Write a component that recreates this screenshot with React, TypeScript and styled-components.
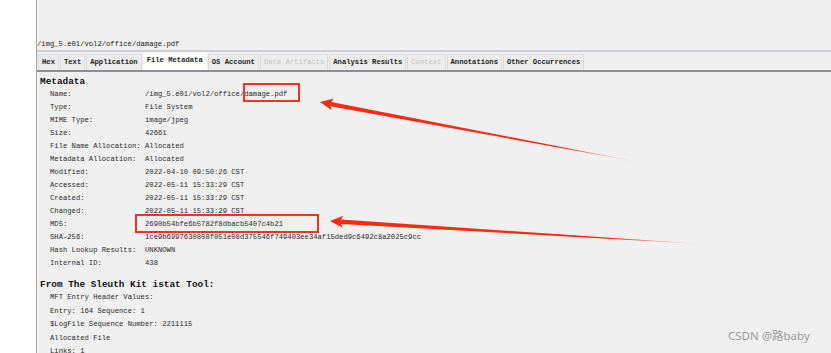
import styled, { createGlobalStyle } from "styled-components";

const GlobalStyle = createGlobalStyle`
    html, body {
        margin: 0;
        padding: 0;
        background: #ffffff;
    }
`;

const mono = `"Liberation Mono", "DejaVu Sans Mono", monospace`;

const Page = styled.div`
    position: relative;
    width: 831px;
    height: 353px;
    overflow: hidden;
    display: flex;
    font-family: ${mono};
    color: #2a2a2a;
`;

const LeftGutter = styled.div`
    width: 36px;
    flex-shrink: 0;
    background: #ffffff;
`;

const Main = styled.div`
    flex: 1;
    min-height: 0;
    display: flex;
    flex-direction: column;
    background: #f0f0f0;
    border-left: 1px solid #a4a4a4;
`;

const TopArea = styled.div`
    height: 38px;
    flex-shrink: 0;
`;

const PathBar = styled.div`
    height: 12px;
    flex-shrink: 0;
    line-height: 12px;
    font-size: 7.2px;
    color: #222;
    border-bottom: 2px solid #cdcdd2;
`;

const TabBar = styled.div`
    height: 18px;
    flex-shrink: 0;
    display: flex;
    align-items: flex-end;
    padding-left: 1px;
    border-bottom: 2px solid #8e8e94;
`;

const Tab = styled.div<{ $active?: boolean; $disabled?: boolean }>`
    height: ${(p) => (p.$active ? 17 : 15)}px;
    line-height: 15px;
    padding: 0 3px;
    margin-right: 1px;
    font-size: 7.2px;
    white-space: nowrap;
    border: 1px solid ${(p) => (p.$active ? "#ffffff" : "#dcdcdc")};
    border-bottom: none;
    background: ${(p) => (p.$active ? "#ffffff" : "#ededed")};
    color: ${(p) => (p.$disabled ? "#c2c2c2" : "#1e1e1e")};
    font-weight: ${(p) => (p.$disabled ? "normal" : "bold")};
`;

const Content = styled.div`
    flex: 1;
    min-height: 0;
    overflow: hidden;
    padding: 3px 0 0 3px;
`;

const Heading = styled.div<{ $gap?: number }>`
    font-size: 9.4px;
    font-weight: bold;
    line-height: 13px;
    color: #111;
    margin-top: ${(p) => p.$gap ?? 0}px;
`;

const FieldGrid = styled.div`
    display: grid;
    grid-template-columns: 95px auto;
    grid-auto-rows: 13px;
    padding-left: 10px;
    font-size: 7.2px;
    line-height: 13px;
    white-space: nowrap;
`;

const Lines = styled.div`
    padding-left: 10px;
    font-size: 7.2px;
    line-height: 13.5px;
    white-space: nowrap;
`;

const Overlay = styled.svg`
    position: absolute;
    left: 0;
    top: 0;
    pointer-events: none;
`;

const Highlight = styled.div<{ $x: number; $y: number; $w: number; $h: number }>`
    position: absolute;
    left: ${(p) => p.$x}px;
    top: ${(p) => p.$y}px;
    width: ${(p) => p.$w}px;
    height: ${(p) => p.$h}px;
    box-sizing: border-box;
    border: 2px solid #f5321e;
`;

const Watermark = styled.div`
    position: absolute;
    left: 728px;
    top: 327px;
    font-family: "Noto Sans", "Noto Sans CJK SC", sans-serif;
    font-size: 11.5px;
    color: #9a9a9a;
    white-space: nowrap;
`;

const tabs = [
    { label: "Hex" },
    { label: "Text" },
    { label: "Application" },
    { label: "File Metadata", active: true },
    { label: "OS Account" },
    { label: "Data Artifacts", disabled: true },
    { label: "Analysis Results" },
    { label: "Context", disabled: true },
    { label: "Annotations" },
    { label: "Other Occurrences" }
];

const fields: [string, string][] = [
    ["Name:", "/img_5.e01/vol2/office/damage.pdf"],
    ["Type:", "File System"],
    ["MIME Type:", "image/jpeg"],
    ["Size:", "42661"],
    ["File Name Allocation:", "Allocated"],
    ["Metadata Allocation:", "Allocated"],
    ["Modified:", "2022-04-10 09:50:26 CST"],
    ["Accessed:", "2022-05-11 15:33:29 CST"],
    ["Created:", "2022-05-11 15:33:29 CST"],
    ["Changed:", "2022-05-11 15:33:29 CST"],
    ["MD5:", "2690b54bfe6b5782f8dbacb5407c4b21"],
    ["SHA-256:", "1ce9b6997630808f051e08d375546f749403ee34af15ded9c6492c8a2025c9cc"],
    ["Hash Lookup Results:", "UNKNOWN"],
    ["Internal ID:", "438"]
];

const istatLines = [
    "MFT Entry Header Values:",
    "Entry: 164 Sequence: 1",
    "$LogFile Sequence Number: 2211115",
    "Allocated File",
    "Links: 1"
];

// tapered arrow: wide near the head, thin at the tail
const arrowPath = (tx: number, ty: number, ex: number, ey: number) => {
    const dx = ex - tx;
    const dy = ey - ty;
    const len = Math.hypot(dx, dy);
    const ux = dx / len;
    const uy = dy / len;
    const nx = -uy;
    const ny = ux;
    const head = 13;
    const hx = tx + ux * head;
    const hy = ty + uy * head;
    const pt = (x: number, y: number) => `${x.toFixed(1)},${y.toFixed(1)}`;
    return [
        pt(tx, ty),
        pt(hx + nx * 6, hy + ny * 6),
        pt(hx - ux * 2 + nx * 2.2, hy - uy * 2 + ny * 2.2),
        pt(ex, ey),
        pt(hx - ux * 2 - nx * 2.2, hy - uy * 2 - ny * 2.2),
        pt(hx - nx * 6, hy - ny * 6)
    ].join(" ");
};

const App = () => {
    return (
        <>
            <GlobalStyle />
            <Page>
                <LeftGutter />
                <Main>
                    <TopArea />
                    <PathBar>/img_5.e01/vol2/office/damage.pdf</PathBar>
                    <TabBar>
                        {tabs.map((t) => (
                            <Tab key={t.label} $active={t.active} $disabled={t.disabled}>
                                {t.label}
                            </Tab>
                        ))}
                    </TabBar>
                    <Content>
                        <Heading>Metadata</Heading>
                        <FieldGrid>
                            {fields.flatMap(([k, v]) => [
                                <span key={k}>{k}</span>,
                                <span key={k + "-v"}>{v}</span>
                            ])}
                        </FieldGrid>
                        <Heading $gap={8}>From The Sleuth Kit istat Tool:</Heading>
                        <Lines>
                            {istatLines.map((l) => (
                                <div key={l}>{l}</div>
                            ))}
                        </Lines>
                    </Content>
                </Main>

                <Highlight $x={243} $y={83} $w={57} $h={19} />
                <Highlight $x={135} $y={214} $w={184} $h={19} />
                <Overlay width={831} height={353}>
                    <defs>
                        <linearGradient id="fade1" x1="320" y1="102" x2="638" y2="162" gradientUnits="userSpaceOnUse">
                            <stop offset="0" stopColor="#ff2a14" />
                            <stop offset="0.75" stopColor="#ff2a14" />
                            <stop offset="1" stopColor="#ff2a14" stopOpacity="0.1" />
                        </linearGradient>
                        <linearGradient id="fade2" x1="330" y1="221" x2="702" y2="244" gradientUnits="userSpaceOnUse">
                            <stop offset="0" stopColor="#ff2a14" />
                            <stop offset="0.75" stopColor="#ff2a14" />
                            <stop offset="1" stopColor="#ff2a14" stopOpacity="0.1" />
                        </linearGradient>
                    </defs>
                    <polygon points={arrowPath(320, 102, 638, 162)} fill="url(#fade1)" />
                    <polygon points={arrowPath(330, 221, 702, 244)} fill="url(#fade2)" />
                </Overlay>
                <Watermark>CSDN @路baby</Watermark>
            </Page>
        </>
    );
};

export default App;
